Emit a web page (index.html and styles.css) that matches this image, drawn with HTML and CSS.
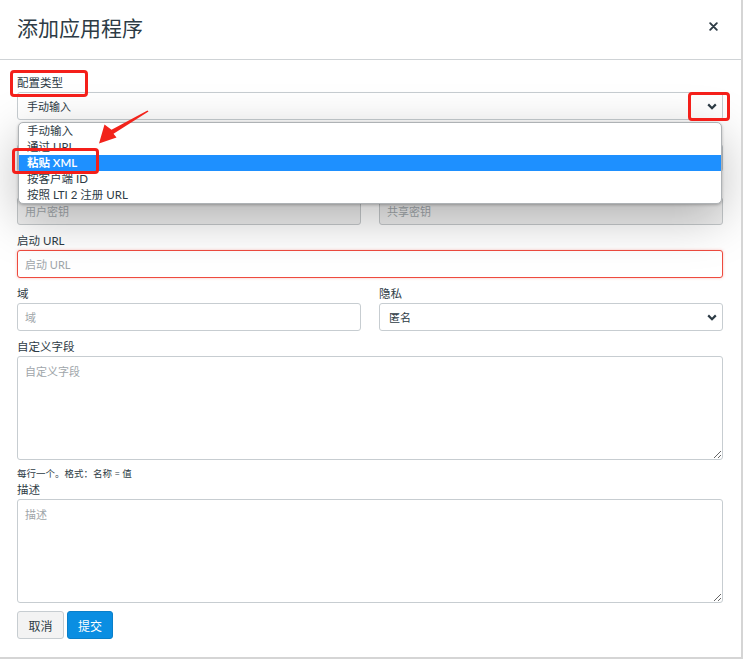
FILE: index.html
```html
<!DOCTYPE html>
<html lang="zh-CN">
<head>
<meta charset="utf-8">
<title>添加应用程序</title>
<link rel="stylesheet" href="styles.css">
</head>
<body>
<div class="modal">
  <header class="modal-header">
    <h1 class="modal-title">添加应用程序</h1>
    <button class="close" type="button" aria-label="关闭">
      <svg width="9" height="9" viewBox="0 0 9 9"><path d="M1.2 1.2L7.8 7.8M7.8 1.2L1.2 7.8" stroke="#2d3b45" stroke-width="1.9" stroke-linecap="round"/></svg>
    </button>
  </header>
  <form class="modal-body">
    <div class="group group-config">
      <label class="label">配置类型</label>
      <div class="select">
        <span>手动输入</span>
        <svg class="chev" width="10" height="7" viewBox="0 0 10 7"><path d="M1.2 1.4L5 5.2L8.8 1.4" fill="none" stroke="#2d3b45" stroke-width="2.2"/></svg>
      </div>
      <ul class="listbox">
        <li>手动输入</li>
        <li>通过 URL</li>
        <li class="active">粘贴 XML</li>
        <li>按客户端 ID</li>
        <li>按照 LTI 2 注册 URL</li>
      </ul>
    </div>
    <div class="group">
      <label class="label label-covered">名称</label>
      <input class="input" placeholder="名称">
    </div>
    <div class="row">
      <div class="group">
        <label class="label label-covered">用户密钥</label>
        <input class="input" placeholder="用户密钥" disabled>
      </div>
      <div class="group">
        <label class="label label-covered">共享密钥</label>
        <input class="input" placeholder="共享密钥" disabled>
      </div>
    </div>
    <div class="group">
      <label class="label">启动 URL</label>
      <input class="input input-error" placeholder="启动 URL">
    </div>
    <div class="row">
      <div class="group">
        <label class="label">域</label>
        <input class="input" placeholder="域">
      </div>
      <div class="group">
        <label class="label">隐私</label>
        <div class="select">
          <span>匿名</span>
          <svg class="chev" width="10" height="7" viewBox="0 0 10 7"><path d="M1.2 1.4L5 5.2L8.8 1.4" fill="none" stroke="#2d3b45" stroke-width="2.2"/></svg>
        </div>
      </div>
    </div>
    <div class="group group-tight">
      <label class="label">自定义字段</label>
      <textarea class="textarea" placeholder="自定义字段"></textarea>
      <p class="help">每行一个。格式：名称 = 值</p>
    </div>
    <div class="group">
      <label class="label">描述</label>
      <textarea class="textarea textarea-desc" placeholder="描述"></textarea>
    </div>
    <div class="actions">
      <button class="btn btn-default" type="button">取消</button>
      <button class="btn btn-primary" type="button">提交</button>
    </div>
  </form>
  <div class="annotations">
    <div class="mark mark-label"></div>
    <div class="mark mark-chev"></div>
    <div class="mark mark-item"></div>
    <svg class="arrow" width="160" height="160" viewBox="0 0 160 160">
      <polygon points="148.5,111.5 113.5,133.8 116.5,137.5 99,143.5 104.5,124.5 111.5,129.8 147.5,110.5" fill="#f2231b"/>
    </svg>
  </div>
</div>
</body>
</html>
```

FILE: styles.css
```css
* { box-sizing: border-box; }

html, body {
  margin: 0;
  padding: 0;
  background: #fff;
}

body {
  font-family: "Lato", "Noto Sans CJK SC", sans-serif;
  color: #2d3b45;
}

.modal {
  position: relative;
  width: 743px;
  height: 659px;
  background: #fff;
  border-right: 2px solid #d5d5d5;
  border-bottom: 2px solid #d5d5d5;
  overflow: hidden;
}

.modal-header {
  height: 60px;
  border-bottom: 1px solid #cfd3d6;
  display: flex;
  align-items: center;
  justify-content: space-between;
  padding: 0 23px 0 17px;
}

.modal-title {
  margin: 0;
  font-size: 21px;
  font-weight: 400;
  color: #2d3b45;
  line-height: 1;
  padding-bottom: 4px;
}

.close {
  border: 0;
  background: transparent;
  padding: 0;
  width: 10px;
  height: 10px;
  display: flex;
  align-items: center;
  justify-content: center;
  margin-bottom: 6px;
}

.modal-body {
  padding: 15px 18px 0 17px;
  margin: 0;
}

.group {
  margin-bottom: 8px;
  position: relative;
}

.group-config {
  margin-bottom: 7px;
  z-index: 5;
}

.label {
  display: block;
  font-size: 11.5px;
  line-height: 16px;
  margin-bottom: 1px;
  color: #2d3b45;
}

/* labels that sit entirely under the open dropdown list */
.label-covered {
  visibility: hidden;
}

.input,
.select,
.textarea {
  display: block;
  width: 100%;
  border: 1px solid #c7cdd1;
  border-radius: 3px;
  background: #fff;
  font-family: "Lato", "Noto Sans CJK SC", sans-serif;
  font-size: 11px;
  color: #2d3b45;
}

.input {
  height: 28px;
  padding: 0 7px;
  outline: none;
}

.input::placeholder,
.textarea::placeholder {
  color: #a0a6aa;
  opacity: 1;
}

.input:disabled {
  background: #eeeeee;
  border-color: #c4c8ca;
}

.input-error {
  border-color: #ee4b3f;
  box-shadow: 0 0 3px rgba(238, 75, 63, 0.35);
}

.select {
  height: 28px;
  padding: 0 5px 0 9px;
  display: flex;
  align-items: center;
  justify-content: space-between;
}

.chev {
  display: block;
  margin-top: 1px;
}

.listbox {
  position: absolute;
  left: 1px;
  right: 1px;
  top: 47px;
  margin: 0;
  padding: 0;
  list-style: none;
  background: #fff;
  border: 1px solid #aeb2b5;
  border-radius: 5px;
  box-shadow: 0 14px 50px rgba(0, 0, 0, 0.26), 0 1px 3px rgba(0, 0, 0, 0.25);
  overflow: hidden;
}

.listbox li {
  height: 16px;
  line-height: 16px;
  padding-left: 8px;
  font-size: 11.5px;
  color: #2d3b45;
}

.listbox li.active {
  background: #1e90ff;
  color: #fff;
  font-weight: 600;
}

.row {
  display: grid;
  grid-template-columns: 1fr 1fr;
  column-gap: 18px;
}

.group-tight {
  margin-bottom: 1px;
}

.textarea {
  height: 104px;
  padding: 6px 7px;
  resize: vertical;
  outline: none;
}

.help {
  margin: 7px 0 0;
  font-size: 9.5px;
  line-height: 14px;
  color: #2d3b45;
}

.actions {
  display: flex;
  gap: 3px;
}

.btn {
  height: 28px;
  border-radius: 3px;
  font-family: "Lato", "Noto Sans CJK SC", sans-serif;
  font-size: 12px;
  padding: 0;
  cursor: pointer;
}

.btn-default {
  width: 47px;
  background: #f3f3f3;
  border: 1px solid #c7cdd1;
  color: #2d3b45;
}

.btn-primary {
  width: 46px;
  background: #0a8ee2;
  border: 1px solid #0a7fc9;
  color: #fff;
}

.annotations {
  position: absolute;
  inset: 0;
  pointer-events: none;
  z-index: 10;
}

.mark {
  position: absolute;
  border: 3px solid #f41f1a;
  border-radius: 4px;
}

.mark-label {
  left: 10px;
  top: 70px;
  width: 78px;
  height: 27px;
}

.mark-chev {
  left: 688px;
  top: 92px;
  width: 42px;
  height: 29px;
}

.mark-item {
  left: 12px;
  top: 148px;
  width: 87px;
  height: 26px;
}

.arrow {
  position: absolute;
  left: 0;
  top: 0;
}
```
